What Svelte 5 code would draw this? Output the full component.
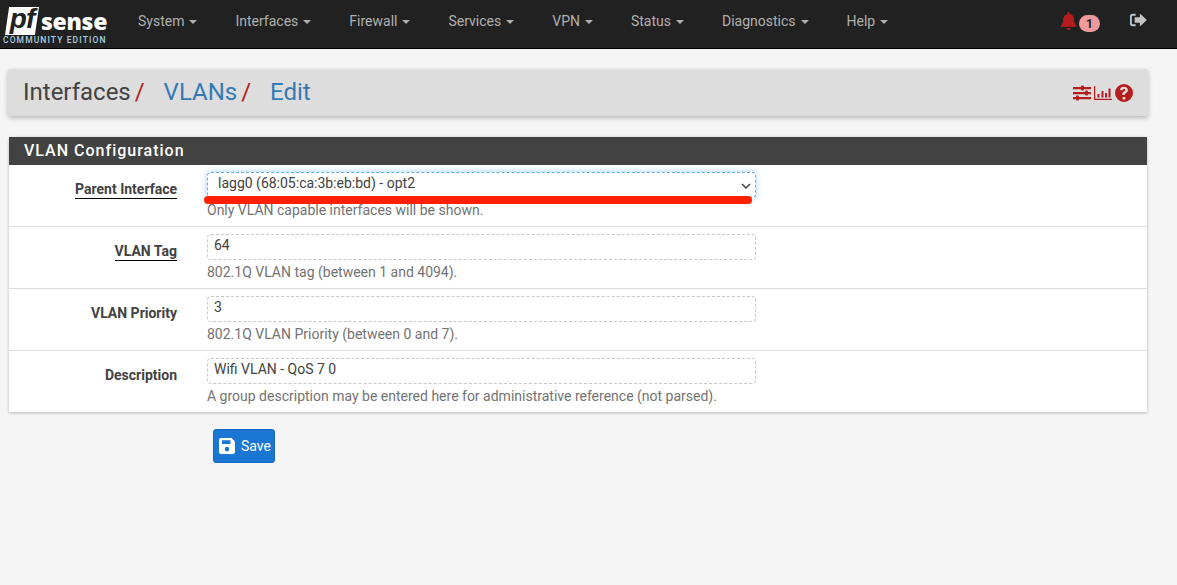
<script>
	const menus = ["System", "Interfaces", "Firewall", "Services", "VPN", "Status", "Diagnostics", "Help"];
	const rows = [
		{ label: "VLAN Tag", value: "64", hint: "802.1Q VLAN tag (between 1 and 4094).", underline: true },
		{ label: "VLAN Priority", value: "3", hint: "802.1Q VLAN Priority (between 0 and 7)." },
		{ label: "Description", value: "Wifi VLAN - QoS 7 0", hint: "A group description may be entered here for administrative reference (not parsed)." }
	];
</script>

<nav class="navbar">
	<div class="logo">
		<div class="logo-top">
			<span class="logo-pf">pf</span>
			<span class="logo-sense">sense</span>
		</div>
		<div class="logo-edition">COMMUNITY EDITION</div>
	</div>
	<ul class="menu">
		{#each menus as menu}
			<li>{menu}<span class="caret"></span></li>
		{/each}
	</ul>
	<div class="nav-right">
		<svg class="bell" viewBox="0 0 18 20" aria-hidden="true">
			<path d="M9 0.5c.8 0 1.4.6 1.4 1.4v.5c2.8.6 4.3 3 4.3 5.6 0 4 1 5.3 2.8 7v1.2H.5V15.500c1.800-1.700 2.800-3 2.800-7 0-2.600 1.500-5 4.300-5.600v-.5C7.600 1.100 8.200.5 9 .5Z" />
			<path d="M6.600 17.600h4.800c-.2 1.100-1.200 1.900-2.400 1.900s-2.200-.8-2.400-1.900Z" />
		</svg>
		<span class="badge">1</span>
		<svg class="signout" viewBox="0 0 20 16" aria-hidden="true">
			<path class="signout-door" d="M7 1.500H3.500C2.100 1.500 1 2.600 1 4v8c0 1.400 1.100 2.500 2.500 2.500H7v-2H3.800c-.4 0-.8-.4-.8-.8V4.300c0-.4.400-.8.800-.8H7Z" />
			<path class="signout-arrow" d="M11.500 1.200 18.800 8l-7.300 6.800v-3.900H6V5.100h5.500Z" />
		</svg>
	</div>
</nav>

<header class="crumbs">
	<h1>
		<span>Interfaces</span><i>/</i>
		<a href="#vlans">VLANs</a><i>/</i>
		<a href="#edit">Edit</a>
	</h1>
	<div class="crumb-icons">
		<svg width="18" height="16" viewBox="0 0 18 16" aria-hidden="true">
			<path d="M0 2h18v2.200H0ZM0 7h18v2.200H0ZM0 12h18v2.200H0Z" />
			<rect x="8" y="0.500" width="3" height="5" rx="1" />
			<rect x="12" y="5.500" width="3" height="5" rx="1" />
			<rect x="3" y="10.500" width="3" height="5" rx="1" />
		</svg>
		<svg width="18" height="16" viewBox="0 0 18 16" aria-hidden="true">
			<path d="M0 1h1.200v12.800H18V15H0Z" />
			<path d="M3.500 9h2v3.500h-2ZM7.500 6h2v6.500h-2ZM11 8h2v4.500h-2ZM14.500 3.500h2v9h-2Z" />
		</svg>
		<svg width="18" height="18" viewBox="0 0 18 18" aria-hidden="true">
			<path fill-rule="evenodd" d="M9 0a9 9 0 1 1 0 18A9 9 0 0 1 9 0ZM7.700 13v2.400h2.600V13ZM9 2.800c-2.300 0-3.700 1.200-4 3.200l2.400.4c.1-1 .7-1.500 1.500-1.500s1.400.5 1.400 1.200c0 .6-.3 1-1.100 1.500-1.300.8-1.900 1.500-1.900 2.900v.5h2.500v-.3c0-.7.300-1 1.100-1.500 1.300-.8 2-1.700 2-3.100 0-2-1.700-3.300-3.900-3.300Z" />
		</svg>
	</div>
</header>

<section class="panel">
	<h2>VLAN Configuration</h2>
	<div class="row">
		<span class="label"><u>Parent Interface</u></span>
		<div class="field">
			<div class="input select">
				lagg0 (68:05:ca:3b:eb:bd) - opt2
				<svg class="chevron" width="10" height="6" viewBox="0 0 10 6" aria-hidden="true">
					<path d="M1 1l4 4 4-4" />
				</svg>
			</div>
			<div class="scribble"></div>
			<p class="hint">Only VLAN capable interfaces will be shown.</p>
		</div>
	</div>
	{#each rows as row}
		<div class="row">
			<span class="label">
				{#if row.underline}<u>{row.label}</u>{:else}{row.label}{/if}
			</span>
			<div class="field">
				<div class="input">{row.value}</div>
				<p class="hint">{row.hint}</p>
			</div>
		</div>
	{/each}
</section>

<button class="save" type="button">
	<svg width="16" height="16" viewBox="0 0 16 16" aria-hidden="true">
		<path fill-rule="evenodd" d="M2 0h10.500L16 3.500V14a2 2 0 0 1-2 2H2a2 2 0 0 1-2-2V2a2 2 0 0 1 2-2ZM3 2.200V6h8.500V2.200ZM8 8.800a2.300 2.300 0 1 0 0 4.600 2.300 2.300 0 0 0 0-4.600Z" />
	</svg>
	Save
</button>

<style>
	:global(body) {
		background: #f5f5f5;
		font-family: Roboto, "Liberation Sans", sans-serif;
		font-size: 14px;
		color: #424242;
		min-height: 585px;
		overflow: hidden;
	}

	.navbar {
		display: flex;
		align-items: flex-start;
		height: 48px;
		background: #212121;
		border-bottom: 1px solid #000;
	}

	.logo {
		width: 119px;
		flex: none;
		padding: 7px 0 0 3px;
		box-sizing: border-box;
	}

	.logo-top {
		display: flex;
		align-items: center;
		height: 28px;
	}

	.logo-pf {
		display: block;
		width: 34px;
		height: 28px;
		margin-left: 2px;
		background: #fff;
		color: #212121;
		clip-path: polygon(12% 0, 100% 0, 88% 100%, 0 100%);
		font-family: "Liberation Sans", sans-serif;
		font-style: italic;
		font-weight: 700;
		font-size: 28px;
		line-height: 23px;
		letter-spacing: -1px;
		text-align: center;
	}

	.logo-sense {
		margin-left: 2px;
		color: #fff;
		font-family: "Open Sans", sans-serif;
		font-weight: 800;
		font-size: 23px;
		line-height: 28px;
		letter-spacing: -0.3px;
	}

	.logo-edition {
		margin-top: 1px;
		color: #a9cfe0;
		font-family: Roboto, sans-serif;
		font-weight: 500;
		font-size: 8.500px;
		line-height: 9px;
		letter-spacing: 1.100px;
		white-space: nowrap;
	}

	.menu {
		display: flex;
		list-style: none;
		margin: 0;
		padding: 0;
	}

	.menu li {
		padding: 0 19px;
		color: #b0b0b0;
		font-size: 14px;
		line-height: 42px;
		white-space: nowrap;
	}

	.caret {
		display: inline-block;
		margin-left: 5px;
		vertical-align: 2px;
		border-top: 4px solid #b0b0b0;
		border-left: 4px solid transparent;
		border-right: 4px solid transparent;
	}

	.nav-right {
		display: flex;
		align-items: flex-start;
		margin-left: auto;
	}

	.bell {
		width: 17px;
		height: 20px;
		margin-top: 11px;
		fill: #b71c1c;
	}

	.badge {
		width: 21px;
		height: 17px;
		margin: 15px 0 0 2px;
		border-radius: 9px;
		background: #ef9a9a;
		color: #212121;
		font-size: 12px;
		font-weight: 700;
		line-height: 18px;
		text-align: center;
	}

	.signout {
		width: 19px;
		height: 16px;
		margin: 12px 29px 0 29px;
	}

	.signout-door {
		fill: #b0c4d0;
	}

	.signout-arrow {
		fill: #c4c4c4;
	}

	.crumbs {
		display: flex;
		align-items: center;
		justify-content: space-between;
		height: 47px;
		margin: 20px 29px 0 8px;
		padding: 0 15px;
		box-sizing: border-box;
		background: #ddd;
		border-radius: 3px;
		box-shadow: 0 2px 5px rgba(0, 0, 0, 0.26);
	}

	h1 {
		margin: 0;
		font-size: 24px;
		font-weight: 400;
		line-height: 47px;
		color: #424242;
		white-space: nowrap;
	}

	h1 i {
		margin: 0 13px 0 4px;
		color: #b71c1c;
		font-style: normal;
	}

	h1 a {
		color: #337ab7;
		text-decoration: none;
	}

	.crumb-icons {
		display: flex;
		align-items: center;
		gap: 2px;
		margin-right: 0;
	}

	.crumb-icons svg {
		fill: #b71c1c;
		margin-left: 1px;
	}

	.panel {
		margin: 21px 30px 0 9px;
		background: #fff;
		box-shadow: 0 1px 3px rgba(0, 0, 0, 0.25);
	}

	h2 {
		margin: 0;
		height: 28px;
		padding-left: 15px;
		background: #424242;
		color: #fff;
		font-size: 16px;
		font-weight: 500;
		line-height: 28px;
		letter-spacing: 1px;
	}

	.row {
		display: grid;
		grid-template-columns: 168px 549px;
		column-gap: 30px;
		height: 61px;
		border-top: 1px solid #ddd;
		box-sizing: content-box;
	}

	.row:first-of-type {
		border-top: 0;
	}

	.label {
		padding-top: 15px;
		font-weight: 700;
		font-size: 14px;
		line-height: 18px;
		text-align: right;
		color: #424242;
	}

	.label u {
		text-decoration: none;
		border-bottom: 1px solid #000;
		padding-bottom: 1px;
	}

	.field {
		position: relative;
		padding-top: 7px;
	}

	.input {
		height: 24px;
		padding: 0 6px;
		border: 1px dashed #c8c8c8;
		border-radius: 4px;
		background: #fff;
		color: #424242;
		font-size: 14px;
		line-height: 21px;
	}

	.select {
		position: relative;
		padding-left: 10px;
		border: 1px dashed #66afe9;
		box-shadow: 0 0 6px rgba(102, 175, 233, 0.6);
	}

	.chevron {
		position: absolute;
		right: 4px;
		top: 10px;
		fill: none;
		stroke: #424242;
		stroke-width: 1.500;
	}

	.scribble {
		position: absolute;
		left: -3px;
		top: 31px;
		width: 548px;
		height: 8px;
		border-radius: 4px;
		background: #ff2000;
	}

	.hint {
		margin: 3px 0 0;
		color: #737373;
		font-size: 14px;
		line-height: 18px;
		white-space: nowrap;
	}

	.save {
		display: flex;
		align-items: center;
		gap: 6px;
		width: 62px;
		height: 34px;
		margin: 17px 0 0 213px;
		padding: 0 0 0 5px;
		box-sizing: border-box;
		border: 1px solid #1565c0;
		border-radius: 3px;
		background: #1976d2;
		color: #fff;
		font-family: Roboto, sans-serif;
		font-size: 14px;
	}

	.save svg {
		fill: #fff;
		flex: none;
	}
</style>
